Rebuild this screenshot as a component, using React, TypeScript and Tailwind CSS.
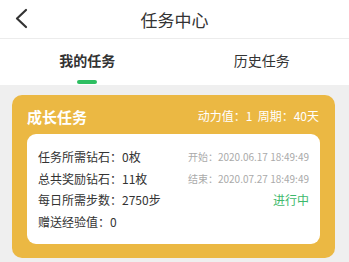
import React from "react";

const font = { fontFamily: '"Noto Sans CJK SC", "Noto Sans", sans-serif' };

export default function App() {
  return (
    <div className="w-[349px] h-[262px] bg-[#efefef] overflow-hidden" style={font}>
      <div className="relative h-[39px] bg-white flex items-center justify-center border-b border-[#ececec]">
        <svg className="absolute left-[13px] top-[8px]" width="16" height="21" viewBox="0 0 16 21">
          <path d="M13 2 L4 10.5 L13 19" fill="none" stroke="#333" strokeWidth="2.2" strokeLinecap="round" strokeLinejoin="round" />
        </svg>
        <span className="text-[17px] text-[#333] leading-none">任务中心</span>
      </div>
      <div className="h-[46px] bg-white flex">
        <div className="flex-1 flex flex-col items-center pt-[14px]">
          <span className="text-[14px] font-bold text-[#333] leading-none">我的任务</span>
          <div className="mt-[13px] w-[20px] h-[4px] rounded-full bg-[#2dbe61]" />
        </div>
        <div className="flex-1 flex flex-col items-center pt-[14px]">
          <span className="text-[14px] text-[#333] leading-none">历史任务</span>
        </div>
      </div>
      <div className="px-[12px] pt-[10px] w-[347px]">
        <div className="bg-[#ebb843] rounded-[10px] px-[15px] pt-[12px] pb-[14px]">
          <div className="flex items-center justify-between h-[18px] mb-[9px]">
            <span className="text-[15px] font-bold text-white leading-none">成长任务</span>
            <span className="text-[12px] text-white leading-none pr-[1px]">动力值：1&nbsp;&nbsp;周期：40天</span>
          </div>
          <div className="bg-white rounded-[9px] px-[11px] pt-[16px] pb-[15px] flex flex-col gap-[7.5px]">
            <div className="flex items-center justify-between h-[14px]">
              <span className="text-[12px] text-[#333] leading-none">任务所需钻石：0枚</span>
              <span className="text-[10px] text-[#aaa] leading-none">开始：2020.06.17 18:49:49</span>
            </div>
            <div className="flex items-center justify-between h-[14px]">
              <span className="text-[12px] text-[#333] leading-none">总共奖励钻石：11枚</span>
              <span className="text-[10px] text-[#aaa] leading-none">结束：2020.07.27 18:49:49</span>
            </div>
            <div className="flex items-center justify-between h-[14px]">
              <span className="text-[12px] text-[#333] leading-none">每日所需步数：2750步</span>
              <span className="text-[12px] text-[#3cb96b] leading-none">进行中</span>
            </div>
            <div className="flex items-center justify-between h-[14px]">
              <span className="text-[12px] text-[#333] leading-none">赠送经验值：0</span>
            </div>
          </div>
        </div>
      </div>
    </div>
  );
}
